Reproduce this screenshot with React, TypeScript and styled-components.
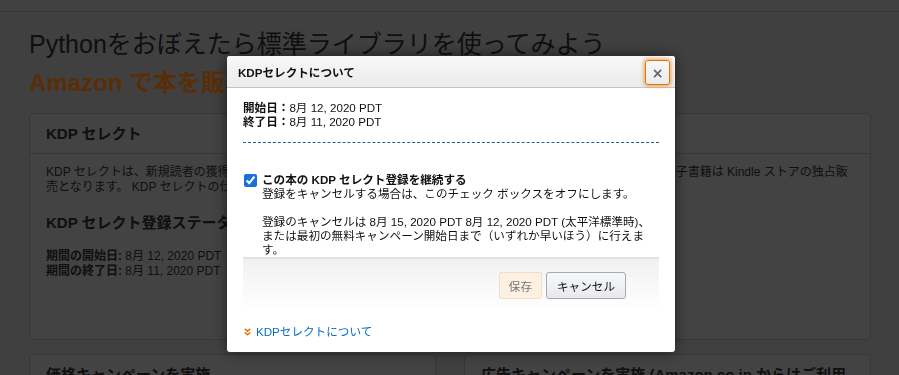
import React from "react";
import styled, { createGlobalStyle } from "styled-components";

const GlobalStyle = createGlobalStyle`
  html, body {
    margin: 0;
    padding: 0;
  }
  body {
    font-family: "Liberation Sans", "Noto Sans CJK JP", sans-serif;
    background: #808080;
    overflow: hidden;
  }
`;

const App = () => {
  return (
    <>
      <GlobalStyle />
      <Page>
        <TopBar />
        <Content>
          <Title>Pythonをおぼえたら標準ライブラリを使ってみよう</Title>
          <SubTitle>Amazon で本を販売する</SubTitle>
          <Card>
            <CardHeader>KDP セレクト</CardHeader>
            <CardBody>
              KDP セレクトは、新規読者の獲得と収益の拡大に役立つ無料のプログラムです。KDP
              セレクトに登録している間、電子書籍は Kindle ストアの独占販
              <br />
              売となります。 KDP セレクトの仕組みについて詳しくは、こちらをご覧ください。
              <SectionHeading>KDP セレクト登録ステータス</SectionHeading>
              <DateList>
                <div>
                  <b>期間の開始日:</b> 8月 12, 2020 PDT
                </div>
                <div>
                  <b>期間の終了日:</b> 8月 11, 2020 PDT
                </div>
              </DateList>
            </CardBody>
          </Card>
          <CardRow>
            <Card $flat>
              <CardHeader>価格キャンペーンを実施</CardHeader>
            </Card>
            <Card $flat>
              <CardHeader>広告キャンペーンを実施 (Amazon.co.jp からはご利用いただけません)</CardHeader>
            </Card>
          </CardRow>
        </Content>
      </Page>

      <Backdrop />
      <Modal>
        <ModalHeader>
          <ModalTitle>KDPセレクトについて</ModalTitle>
          <CloseButton aria-label="close">×</CloseButton>
        </ModalHeader>
        <ModalBody>
          <div>
            <b>開始日：</b>8月 12, 2020 PDT
          </div>
          <div>
            <b>終了日：</b>8月 11, 2020 PDT
          </div>
          <Dashed />
          <CheckRow>
            <CheckBox type="checkbox" defaultChecked />
            <CheckText>
              <b>この本の KDP セレクト登録を継続する</b>
              <div>登録をキャンセルする場合は、このチェック ボックスをオフにします。</div>
              <Note>
                登録のキャンセルは 8月 15, 2020 PDT 8月 12, 2020 PDT (太平洋標準時)、または最初の無料キャンペーン開始日まで（いずれか早いほう）に行えます。
              </Note>
            </CheckText>
          </CheckRow>
          <Footer>
            <Button disabled>保存</Button>
            <Button>キャンセル</Button>
          </Footer>
          <LinkRow>
            <svg width="7" height="8" viewBox="0 0 7 8">
              <path d="M0.8 0.8 L3.5 3.2 L6.2 0.8" fill="none" stroke="#e47911" strokeWidth="1.6" />
              <path d="M0.8 4.4 L3.5 6.8 L6.2 4.4" fill="none" stroke="#e47911" strokeWidth="1.6" />
            </svg>
            <Link href="#">KDPセレクトについて</Link>
          </LinkRow>
        </ModalBody>
      </Modal>
    </>
  );
};

const Page = styled.div`
  height: 375px;
  overflow: hidden;
  background: #808080;
  color: #1e1e1e;
`;

const TopBar = styled.div`
  height: 11px;
  background: #838383;
  border-bottom: 1px solid #6a6a6a;
`;

const Content = styled.div`
  padding: 0 28px 0 29px;
`;

const Title = styled.h1`
  margin: 15px 0 0;
  font-size: 25px;
  font-weight: 400;
  line-height: 34px;
  white-space: nowrap;
`;

const SubTitle = styled.h2`
  margin: 7px 0 0;
  font-size: 24px;
  font-weight: 700;
  line-height: 29px;
  color: #b25c0e;
  white-space: nowrap;
`;

const Card = styled.div<{ $flat?: boolean }>`
  margin-top: ${(p) => (p.$flat ? 0 : 16)}px;
  min-width: 0;
  background: #868686;
  border: 1px solid #6f6f6f;
  border-radius: 4px;
`;

const CardHeader = styled.div`
  padding: 10px 16px;
  border-bottom: 1px solid #6f6f6f;
  font-size: 15px;
  font-weight: 700;
  line-height: 19px;
`;

const CardBody = styled.div`
  padding: 11px 16px 60px;
  font-size: 12px;
  line-height: 15px;
`;

const SectionHeading = styled.div`
  margin-top: 18px;
  font-size: 15px;
  font-weight: 700;
  line-height: 19px;
`;

const DateList = styled.div`
  margin-top: 17px;
`;

const CardRow = styled.div`
  display: grid;
  grid-template-columns: minmax(0, 1fr) minmax(0, 1fr);
  gap: 28px;
  margin-top: 14px;
`;

const Backdrop = styled.div`
  position: fixed;
  inset: 0;
  background: rgba(0, 0, 0, 0.5);
`;

const Modal = styled.div`
  position: fixed;
  left: 227px;
  top: 56px;
  width: 448px;
  background: #fff;
  border-radius: 3px;
  box-shadow: 0 0 14px rgba(0, 0, 0, 0.55);
  overflow: hidden;
  color: #111;
  font-size: 11.6px;
  line-height: 14px;
`;

const ModalHeader = styled.div`
  display: flex;
  justify-content: space-between;
  align-items: flex-start;
  height: 27px;
  padding: 4px 5px 0 11px;
  background: linear-gradient(#f8f8f8, #ebebeb);
  border-bottom: 1px solid #c4c4c4;
`;

const ModalTitle = styled.div`
  font-weight: 700;
  line-height: 25px;
`;

const CloseButton = styled.button`
  width: 25px;
  height: 25px;
  padding: 0;
  border: 1px solid #e77600;
  border-radius: 3px;
  background: linear-gradient(#f7f8fa, #e9ebee);
  box-shadow: 0 0 3px 2px rgba(228, 121, 17, 0.45);
  color: #666;
  font-family: "DejaVu Sans", sans-serif;
  font-size: 14px;
  font-weight: 700;
  line-height: 22px;
`;

const ModalBody = styled.div`
  padding: 13px 16px 13px;
`;

const Dashed = styled.div`
  margin-top: 13px;
  border-top: 1px dashed #1f5c99;
`;

const CheckRow = styled.div`
  display: flex;
  align-items: flex-start;
  margin-top: 30px;
`;

const CheckBox = styled.input`
  width: 13px;
  height: 13px;
  margin: 1px 5px 0 1px;
  flex: none;
  accent-color: #1a6fd8;
`;

const CheckText = styled.div`
  flex: 1;
`;

const Note = styled.p`
  margin: 14px 0 0;
`;

const Footer = styled.div`
  display: flex;
  justify-content: flex-end;
  gap: 4px;
  padding: 13px 33px 12px;
  border-top: 2px solid #e2e2e2;
  background: linear-gradient(#f1f1f1, #fff);
`;

const Button = styled.button`
  height: 27px;
  padding: 0 10px;
  border: 1px solid #a6a9ae;
  border-radius: 3px;
  background: linear-gradient(#f7f8fa, #e7e9ec);
  color: #111;
  font-family: inherit;
  font-size: 11.6px;

  &:disabled {
    padding: 0 9px;
    border: 1px dotted #e3cfb0;
    background: #fbf0e1;
    color: #777;
  }
`;

const LinkRow = styled.div`
  display: flex;
  align-items: center;
  gap: 5px;
  margin: 14px 0 0 1px;
`;

const Link = styled.a`
  color: #0b6bc6;
  text-decoration: none;
`;

export default App;
